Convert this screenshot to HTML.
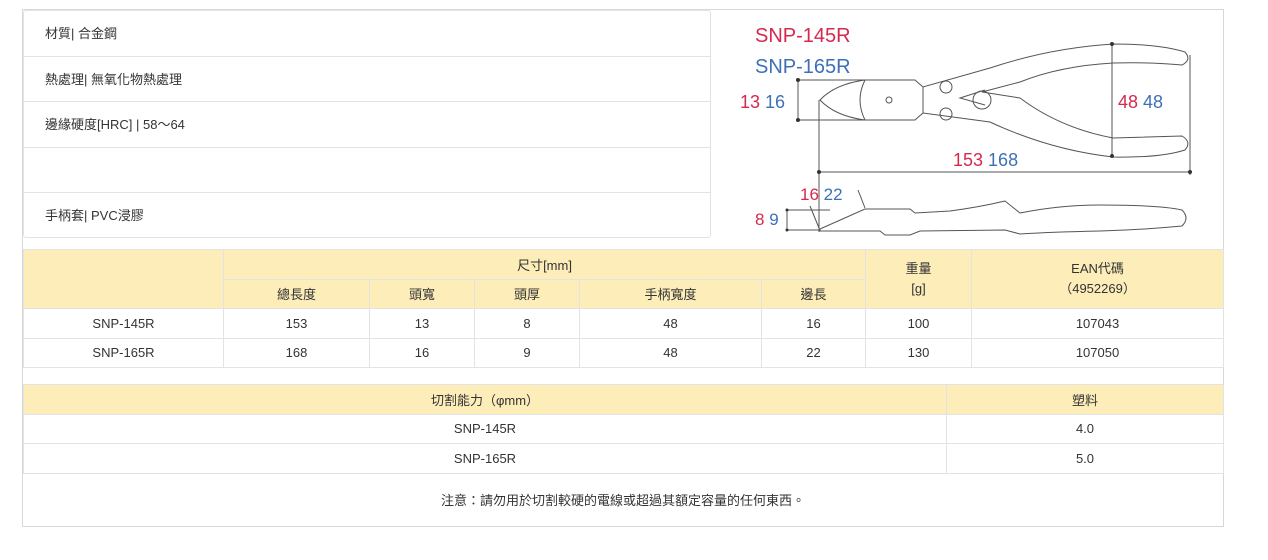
<!DOCTYPE html>
<html><head><meta charset="utf-8"><style>
*{margin:0;padding:0;box-sizing:border-box}
body{width:1268px;height:560px;background:#fff;font-family:"Liberation Sans","Noto Sans CJK TC",sans-serif;font-size:13px;color:#333;position:relative;overflow:hidden}
.a{position:absolute}
.outer{left:22px;top:9px;width:1202px;height:518px;border:1px solid #d8d8d8}
.info{left:23px;top:10px;width:688px;height:228px;border:1px solid #e3e3e3;border-radius:3px}
.info div{height:45.5px;border-bottom:1px solid #e3e3e3;padding-left:21px;line-height:45px}
.info div:last-child{border-bottom:none}
table{position:absolute;border-collapse:collapse;table-layout:fixed}
td{border:1px solid #e3e3e3;text-align:center;padding:0;height:29.5px;vertical-align:middle}
.h td{background:#fdedb9}
</style></head><body>
<div class="a outer"></div>
<div class="a info">
<div>材質| 合金鋼</div><div>熱處理| 無氧化物熱處理</div><div>邊緣硬度[HRC] | 58～64</div><div></div><div>手柄套| PVC浸膠</div>
</div>
<svg class="a" style="left:720px;top:10px" width="480" height="230" viewBox="0 0 480 230">
<g font-family="Liberation Sans,sans-serif" font-size="20">
<text x="35" y="32" fill="#d6294f">SNP-145R</text>
<text x="35" y="63" fill="#3d70b8">SNP-165R</text>
<text x="20" y="98" font-size="18" fill="#d6294f">13 <tspan fill="#3d70b8">16</tspan></text>
<text x="398" y="98" font-size="18" fill="#d6294f">48 <tspan fill="#3d70b8">48</tspan></text>
<text x="233" y="156" font-size="18" fill="#d6294f">153 <tspan fill="#3d70b8">168</tspan></text>
<text x="80" y="190" font-size="17" fill="#d6294f">16 <tspan fill="#3d70b8">22</tspan></text>
<text x="35" y="215" font-size="17" fill="#d6294f">8 <tspan fill="#3d70b8">9</tspan></text>
</g>
<g fill="none" stroke="#555" stroke-width="1">
<path d="M78 70V110M78 70H145M78 110H170M99 90V222M99 162H470M470 45V165M392 34V146M67 200V220M67 200H110M67 220H100M90 196L99 218M138 180L145 198"/>
<path d="M100 90Q115 74 145 70H195L203 77L270 58Q330 38 393 34Q440 34 465 42Q472 50 462 55Q430 52 393 53Q340 56 300 72L262 82L300 88Q340 118 393 128Q430 127 462 126Q472 132 465 140Q440 148 393 147Q330 140 270 112L203 103L195 110H145Q115 106 100 90Z"/>
<path d="M145 70Q135 90 145 110M203 77V103M265 80L240 88L265 95"/>
<circle cx="226" cy="77" r="6"/><circle cx="226" cy="104" r="6"/><circle cx="262" cy="90" r="9"/><circle cx="169" cy="90" r="3"/>
<path d="M100 219L145 199H190L195 203L230 201Q260 197 285 191L300 203Q340 195 380 195Q440 195 462 200Q470 208 462 216Q420 220 380 221Q330 222 300 224L285 220L200 221L190 225H165L160 221H100Z"/>
</g>
<g fill="#333"><circle cx="78" cy="70" r="2"/><circle cx="78" cy="110" r="2"/><circle cx="392" cy="34" r="2"/><circle cx="392" cy="146" r="2"/><circle cx="99" cy="162" r="2"/><circle cx="470" cy="162" r="2"/><circle cx="67" cy="200" r="1.5"/><circle cx="67" cy="220" r="1.5"/></g>
</svg>
<table style="left:23px;top:249px;width:1200px">
<colgroup><col style="width:200px"><col style="width:146px"><col style="width:105px"><col style="width:105px"><col style="width:182px"><col style="width:104px"><col style="width:106px"><col style="width:252px"></colgroup>
<tr class="h"><td rowspan="2"></td><td colspan="5">尺寸[mm]</td><td rowspan="2" style="line-height:20px">重量<br>[g]</td><td rowspan="2" style="line-height:20px">EAN代碼<br>（4952269）</td></tr>
<tr class="h"><td>總長度</td><td>頭寬</td><td>頭厚</td><td>手柄寬度</td><td>邊長</td></tr>
<tr><td>SNP-145R</td><td>153</td><td>13</td><td>8</td><td>48</td><td>16</td><td>100</td><td>107043</td></tr>
<tr><td>SNP-165R</td><td>168</td><td>16</td><td>9</td><td>48</td><td>22</td><td>130</td><td>107050</td></tr>
</table>
<table style="left:23px;top:384px;width:1200px">
<colgroup><col style="width:923px"><col style="width:277px"></colgroup>
<tr class="h"><td>切割能力（φmm）</td><td>塑料</td></tr>
<tr><td>SNP-145R</td><td>4.0</td></tr>
<tr><td>SNP-165R</td><td>5.0</td></tr>
</table>
<div class="a" style="left:0;width:1246px;top:490px;text-align:center">注意：請勿用於切割較硬的電線或超過其額定容量的任何東西。</div>
</body></html>
